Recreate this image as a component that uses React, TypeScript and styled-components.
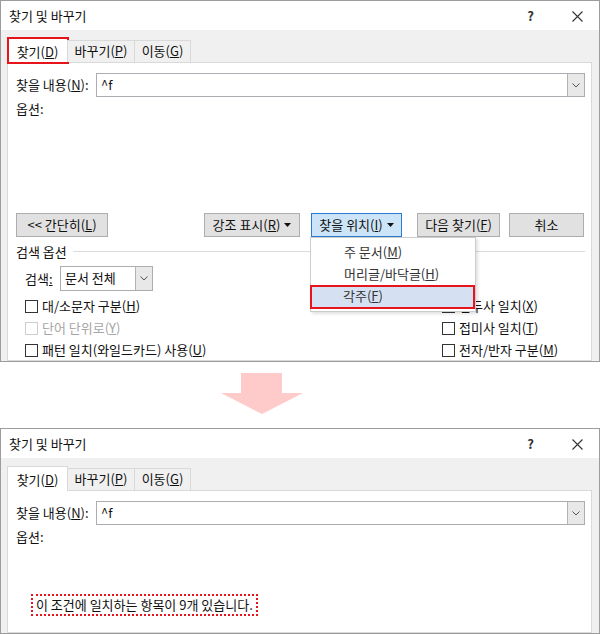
import React from "react";
import styled, { createGlobalStyle } from "styled-components";

const Global = createGlobalStyle`
  html, body { margin: 0; padding: 0; background: #fff; }
  body {
    width: 600px; height: 634px; overflow: hidden;
    font-family: "Noto Sans CJK KR", "Noto Sans", sans-serif;
    font-size: 13px; color: #111;
  }
  * { box-sizing: border-box; }
  u { text-underline-offset: 1px; }
`;

const Page = styled.div`
  display: flex;
  flex-direction: column;
  width: 600px;
`;

const Dialog = styled.section<{ $h: number }>`
  height: ${(p) => p.$h}px;
  flex: none;
  border: 1px solid #9c9c9c;
  background: #f0f0f0;
  display: flex;
  flex-direction: column;
  overflow: hidden;
`;

const TitleBar = styled.header`
  height: 29px;
  flex: none;
  background: #fff;
  display: flex;
  align-items: center;
  justify-content: space-between;
  padding: 1px 16px 0 8px;
`;

const TitleText = styled.span`
  line-height: 16px;
`;

const TitleControls = styled.div`
  display: flex;
  align-items: center;
  gap: 38px;
`;

const HelpMark = styled.span`
  font-size: 13px;
  font-weight: 700;
  color: #333;
  line-height: 16px;
`;

const Body = styled.div`
  flex: 1;
  min-height: 0;
  display: flex;
  flex-direction: column;
  padding: 8px 7px 0 6px;
`;

const TabRow = styled.div`
  height: 25px;
  flex: none;
  display: flex;
  align-items: flex-end;
  position: relative;
  z-index: 1;
`;

const Tab = styled.div<{ $w: number; $active?: boolean; $marked?: boolean }>`
  position: relative;
  width: ${(p) => p.$w}px;
  height: ${(p) => (p.$active ? 25 : 22)}px;
  align-self: ${(p) => (p.$active ? "flex-end" : "flex-start")};
  margin-top: ${(p) => (p.$active ? 0 : 2)}px;
  text-align: center;
  line-height: ${(p) => (p.$active ? 25 : 20)}px;
  background: ${(p) => (p.$active ? "#fff" : "#f0f0f0")};
  border: 1px solid #d9d9d9;
  border-bottom: none;
  margin-left: ${(p) => (p.$active ? 0 : -1)}px;
  white-space: nowrap;
  &::after {
    content: "";
    display: ${(p) => (p.$marked ? "block" : "none")};
    position: absolute;
    top: -2px;
    left: -1px;
    right: -2px;
    bottom: -1px;
    border: 2px solid #e8141b;
  }
`;

const Panel = styled.div`
  flex: 1;
  min-height: 0;
  margin-top: -1px;
  background: #fff;
  border: 1px solid #d9d9d9;
  padding: 10px 6px 0 8px;
  display: flex;
  flex-direction: column;
`;

const FieldRow = styled.div`
  display: flex;
  align-items: center;
  height: 24px;
  flex: none;
`;

const FieldLabel = styled.span`
  width: 80px;
  flex: none;
  line-height: 16px;
  white-space: nowrap;
`;

const Combo = styled.div<{ $w?: number }>`
  ${(p) => (p.$w ? `width: ${p.$w}px; flex: none;` : "flex: 1;")}
  height: 100%;
  border: 1px solid #abadb3;
  background: #fff;
  display: flex;
`;

const ComboText = styled.span`
  flex: 1;
  padding-left: 4px;
  line-height: 22px;
  white-space: nowrap;
`;

const ComboButton = styled.span`
  width: 17px;
  flex: none;
  border-left: 1px solid #b4b4b4;
  background: #e8e8e8;
  display: flex;
  align-items: center;
  justify-content: center;
`;

const OptionsText = styled.div`
  margin-top: 4px;
  line-height: 16px;
  flex: none;
`;

const ButtonRow = styled.div`
  margin-top: 96px;
  height: 24px;
  flex: none;
  display: flex;
`;

const Button = styled.button<{ $w: number; $gap?: number; $pressed?: boolean }>`
  width: ${(p) => p.$w}px;
  height: 24px;
  margin-left: ${(p) => p.$gap ?? 0}px;
  padding: 0;
  font: inherit;
  color: #111;
  background: ${(p) => (p.$pressed ? "#cce4f7" : "#e1e1e1")};
  border: 1px solid ${(p) => (p.$pressed ? "#2a7ad2" : "#adadad")};
  display: flex;
  align-items: center;
  justify-content: center;
  gap: 4px;
  white-space: nowrap;
`;

const ButtonLabel = styled.span`
  line-height: 16px;
`;

const MenuAnchor = styled.div<{ $gap: number }>`
  position: relative;
  margin-left: ${(p) => p.$gap}px;
`;

const Menu = styled.div`
  position: absolute;
  top: 100%;
  left: -1px;
  width: 166px;
  background: #fff;
  border: 1px solid #cccccc;
  box-shadow: 2px 2px 3px rgba(0, 0, 0, 0.12);
  padding: 3px 0 2px;
  z-index: 10;
`;

const MenuItem = styled.div<{ $hl?: boolean }>`
  height: ${(p) => (p.$hl ? 24 : 22)}px;
  line-height: ${(p) => (p.$hl ? 22 : 21)}px;
  padding-left: 33px;
  color: #333;
  background: ${(p) => (p.$hl ? "#d5e1f2" : "transparent")};
  box-shadow: ${(p) => (p.$hl ? "inset 0 0 0 2px #e8141b" : "none")};
  margin-left: ${(p) => (p.$hl ? -1 : 0)}px;
`;

const GroupHeading = styled.div`
  margin-top: 6px;
  height: 18px;
  flex: none;
  display: flex;
  align-items: center;
  gap: 6px;
  line-height: 16px;
  &::after {
    content: "";
    flex: 1;
    height: 1px;
    margin-top: -1px;
    background: #dcdcdc;
  }
`;

const SearchRow = styled.div`
  margin-top: 5px;
  height: 25px;
  flex: none;
  display: flex;
  align-items: center;
  padding-left: 9px;
`;

const SearchLabel = styled.span`
  width: 35px;
  flex: none;
  line-height: 16px;
`;

const CheckGrid = styled.div`
  margin-top: 4px;
  display: grid;
  grid-template-columns: 417px 1fr;
  grid-auto-rows: 22px;
  padding-left: 9px;
`;

const CheckItem = styled.div<{ $disabled?: boolean }>`
  display: flex;
  align-items: center;
  gap: 4px;
  white-space: nowrap;
  line-height: 16px;
  color: ${(p) => (p.$disabled ? "#a6a6a6" : "#111")};
`;

const Box = styled.span<{ $disabled?: boolean }>`
  width: 13px;
  height: 13px;
  flex: none;
  background: #fff;
  border: 1px solid ${(p) => (p.$disabled ? "#cfcfcf" : "#333")};
`;

const ArrowGap = styled.div`
  height: 66px;
  flex: none;
  padding: 11px 0 0 221px;
`;

const Message = styled.div`
  align-self: flex-start;
  margin: 49px 0 0 15px;
  height: 22px;
  border: 2px dotted #e8141b;
  padding: 0 3px;
  line-height: 18px;
  white-space: nowrap;
`;

const Chevron = () => (
  <svg width="8" height="5" viewBox="0 0 8 5">
    <path d="M0.5 0.5 L4 4 L7.5 0.5" fill="none" stroke="#555" strokeWidth="1" />
  </svg>
);

const DropTri = () => (
  <svg width="7" height="4" viewBox="0 0 7 4">
    <path d="M0 0 H7 L3.5 4 Z" fill="#111" />
  </svg>
);

const CloseIcon = () => (
  <svg width="11" height="11" viewBox="0 0 11 11">
    <path d="M0.5 0.5 L10.5 10.5 M10.5 0.5 L0.5 10.5" stroke="#333" strokeWidth="1.1" fill="none" />
  </svg>
);

const DownArrow = () => (
  <svg width="82" height="41" viewBox="0 0 82 41">
    <path d="M20 0 H61 V20 H82 L41 41 L0 20 H20 Z" fill="#ffcaca" />
  </svg>
);

const Check = ({ label, disabled }: { label: React.ReactNode; disabled?: boolean }) => (
  <CheckItem $disabled={disabled}>
    <Box $disabled={disabled} />
    <span>{label}</span>
  </CheckItem>
);

const DialogHeader = () => (
  <TitleBar>
    <TitleText>찾기 및 바꾸기</TitleText>
    <TitleControls>
      <HelpMark>?</HelpMark>
      <CloseIcon />
    </TitleControls>
  </TitleBar>
);

const Tabs = ({ marked }: { marked?: boolean }) => (
  <TabRow>
    <Tab $w={61} $active $marked={marked}>
      찾기(<u>D</u>)
    </Tab>
    <Tab $w={68}>
      바꾸기(<u>P</u>)
    </Tab>
    <Tab $w={57}>
      이동(<u>G</u>)
    </Tab>
  </TabRow>
);

const FindField = () => (
  <FieldRow>
    <FieldLabel>
      찾을 내용(<u>N</u>):
    </FieldLabel>
    <Combo>
      <ComboText>^f</ComboText>
      <ComboButton>
        <Chevron />
      </ComboButton>
    </Combo>
  </FieldRow>
);

export default function App() {
  return (
    <Page>
      <Global />
      <Dialog $h={362}>
        <DialogHeader />
        <Body>
          <Tabs marked />
          <Panel>
            <FindField />
            <OptionsText>옵션:</OptionsText>
            <ButtonRow>
              <Button $w={92}>
                <ButtonLabel>
                  &lt;&lt; 간단히(<u>L</u>)
                </ButtonLabel>
              </Button>
              <Button $w={96} $gap={96}>
                <ButtonLabel>
                  강조 표시(<u>R</u>)
                </ButtonLabel>
                <DropTri />
              </Button>
              <MenuAnchor $gap={11}>
                <Button $w={91} $pressed>
                  <ButtonLabel>
                    찾을 위치(<u>I</u>)
                  </ButtonLabel>
                  <DropTri />
                </Button>
                <Menu>
                  <MenuItem>
                    주 문서(<u>M</u>)
                  </MenuItem>
                  <MenuItem>
                    머리글/바닥글(<u>H</u>)
                  </MenuItem>
                  <MenuItem $hl>
                    각주(<u>F</u>)
                  </MenuItem>
                </Menu>
              </MenuAnchor>
              <Button $w={83} $gap={15}>
                <ButtonLabel>
                  다음 찾기(<u>F</u>)
                </ButtonLabel>
              </Button>
              <Button $w={75} $gap={9}>
                <ButtonLabel>취소</ButtonLabel>
              </Button>
            </ButtonRow>
            <GroupHeading>검색 옵션</GroupHeading>
            <SearchRow>
              <SearchLabel>
                검색<u>:</u>
              </SearchLabel>
              <Combo $w={93}>
                <ComboText>문서 전체</ComboText>
                <ComboButton>
                  <Chevron />
                </ComboButton>
              </Combo>
            </SearchRow>
            <CheckGrid>
              <Check label={<>대/소문자 구분(<u>H</u>)</>} />
              <Check label={<>접두사 일치(<u>X</u>)</>} />
              <Check disabled label={<>단어 단위로(<u>Y</u>)</>} />
              <Check label={<>접미사 일치(<u>T</u>)</>} />
              <Check label={<>패턴 일치(와일드카드) 사용(<u>U</u>)</>} />
              <Check label={<>전자/반자 구분(<u>M</u>)</>} />
            </CheckGrid>
          </Panel>
        </Body>
      </Dialog>
      <ArrowGap>
        <DownArrow />
      </ArrowGap>
      <Dialog $h={206}>
        <DialogHeader />
        <Body>
          <Tabs />
          <Panel>
            <FindField />
            <OptionsText>옵션:</OptionsText>
            <Message>이 조건에 일치하는 항목이 9개 있습니다.</Message>
          </Panel>
        </Body>
      </Dialog>
    </Page>
  );
}
